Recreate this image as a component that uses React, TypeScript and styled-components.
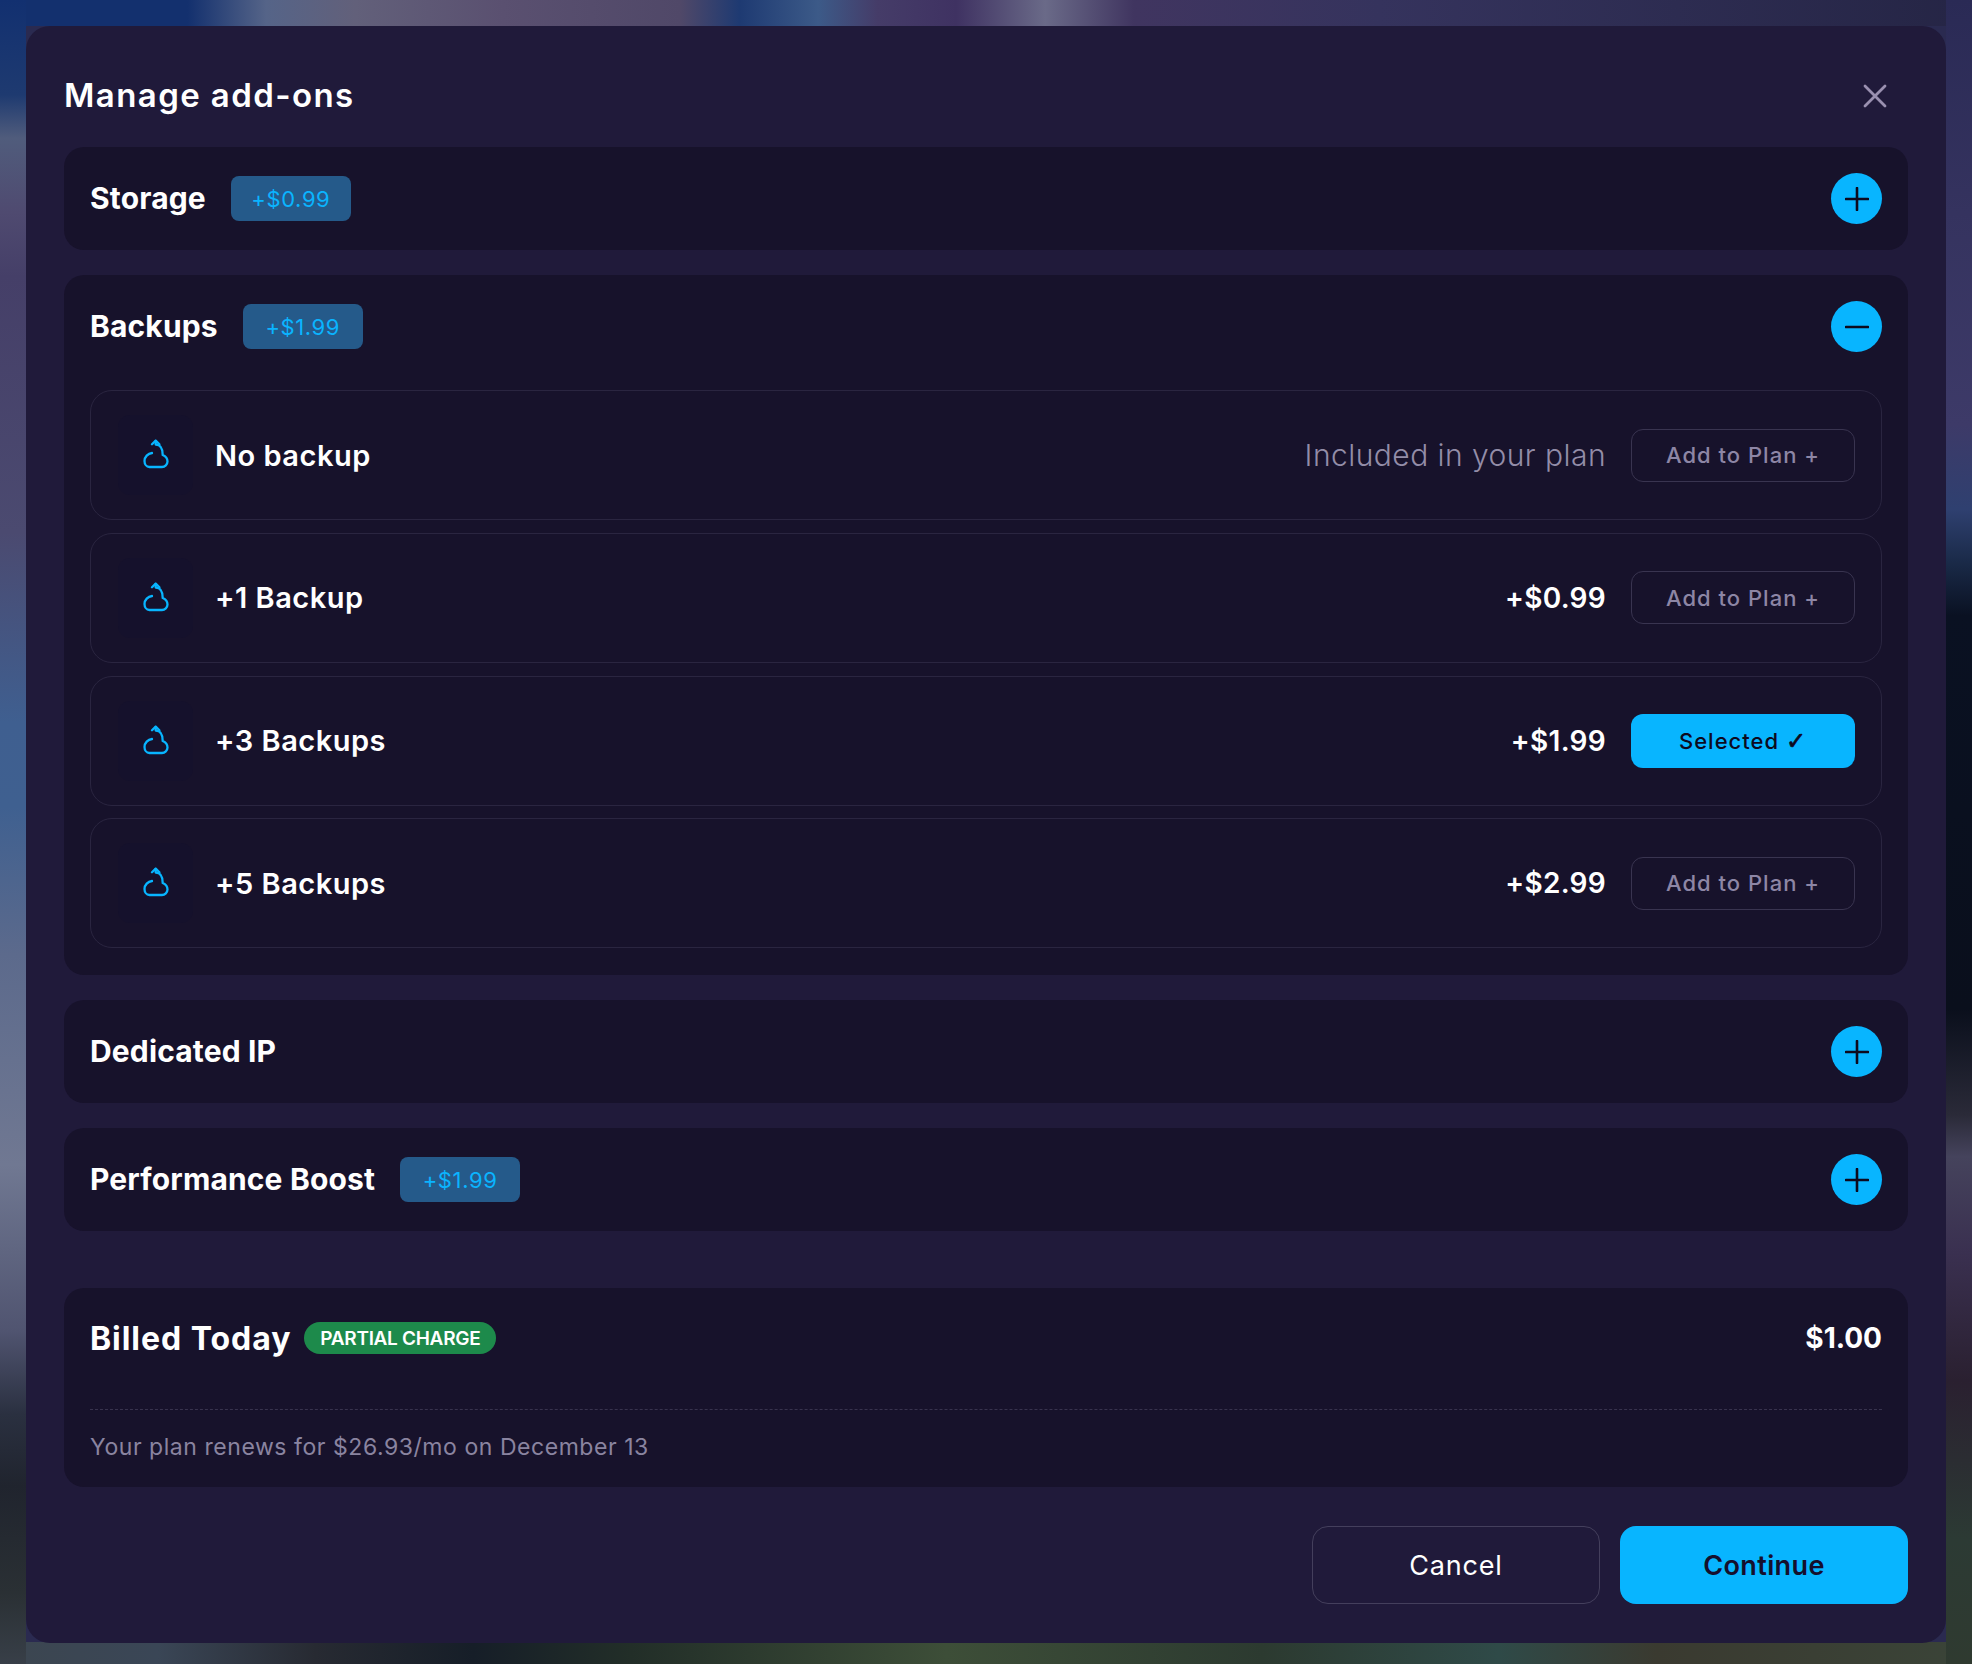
import * as React from 'react';
import styled, { createGlobalStyle } from 'styled-components';

const Global = createGlobalStyle`
  html, body {
    margin: 0;
    padding: 0;
    background: #201a3a;
  }
  * {
    box-sizing: border-box;
  }
`;

const Backdrop = styled.div`
  width: 1972px;
  height: 1664px;
  overflow: hidden;
  padding: 26px 26px 21px;
  font-family: Inter, "Liberation Sans", sans-serif;
  background-color: #2a2a50;
  background-repeat: no-repeat;
  background-size: 26px 100%, 26px 100%, 100% 26px, 100% 22px;
  background-position: left top, right top, left top, left bottom;
  background-image:
    linear-gradient(180deg, #123070 0%, #1e3a70 5.7%, #505c7c 8.3%, #4f4a70 12.8%, #453f68 16.6%, #4b4a70 32%, #3f5f90 43.4%, #3f6090 48.5%, #5c6a8c 57.4%, #707892 70%, #505470 80%, #2a3040 85%, #20242e 89.3%, #2a3034 95.7%, #383f48 100%),
    linear-gradient(180deg, #2a2a55 0%, #35335f 12.8%, #3d3a68 25.5%, #2f4070 30.6%, #1a2a48 33.8%, #0a1122 37%, #0a0f1c 60.6%, #2a2a38 67%, #45435c 69.5%, #3a3050 75.3%, #2a2030 83%, #2c3a34 92.5%, #2f3a30 100%),
    linear-gradient(90deg, #13306e 0%, #13306e 9.5%, #556488 13.5%, #62607a 18%, #5a5070 25.5%, #504868 34.5%, #1e3a72 37.5%, #3c5a88 41.5%, #453c68 44.5%, #3f3262 48.5%, #6a6a88 53%, #403560 57.5%, #35335d 70%, #252545 100%),
    linear-gradient(90deg, #3c4650 0%, #3a4656 8%, #272a32 16%, #161e28 24%, #222e28 32%, #3d4e38 48%, #2c3a30 64%, #2f4a48 76%, #3a3a30 84%, #3a4438 100%);
`;

const Modal = styled.section`
  height: 100%;
  padding: 0 38px;
  background: #201a3a;
  border-radius: 24px;
  display: flex;
  flex-direction: column;
`;

const ModalHeader = styled.header`
  height: 121px;
  padding-top: 38px;
  padding-bottom: 19px;
  display: flex;
  align-items: center;
  justify-content: space-between;
`;

const ModalTitle = styled.h1`
  margin: 0;
  padding-bottom: 2px;
  font-size: 33px;
  font-weight: 600;
  letter-spacing: 1.4px;
  color: #ffffff;
`;

const CloseButton = styled.button`
  width: 30px;
  height: 30px;
  margin-right: 18px;
  padding: 0;
  border: 0;
  background: none;
  display: flex;
  align-items: center;
  justify-content: center;
`;

const Stack = styled.div`
  display: flex;
  flex-direction: column;
  gap: 25px;
`;

const Card = styled.div`
  padding: 26px;
  background: #17122b;
  border-radius: 20px;
`;

const CardHeader = styled.div`
  height: 51px;
  display: flex;
  align-items: center;
  gap: 25px;
`;

const CardTitle = styled.h2`
  margin: 0;
  padding-bottom: 1px;
  font-size: 30px;
  font-weight: 700;
  letter-spacing: 0.15px;
  color: #ffffff;
`;

const PriceBadge = styled.span`
  width: 120px;
  height: 45px;
  display: flex;
  align-items: center;
  justify-content: center;
  background: #255a8a;
  border-radius: 8px;
  font-size: 22px;
  letter-spacing: 0.6px;
  color: #0ab4ff;
`;

const RoundToggle = styled.button`
  width: 51px;
  height: 51px;
  margin-left: auto;
  padding: 0;
  border: 0;
  border-radius: 50%;
  background: #08b5ff;
  display: flex;
  align-items: center;
  justify-content: center;
`;

const Rows = styled.div`
  margin-top: 38px;
  padding-bottom: 1px;
  display: flex;
  flex-direction: column;
  gap: 12.75px;
`;

const Row = styled.div`
  height: 130px;
  padding: 0 26px 0 27px;
  border: 1px solid #2a2540;
  border-radius: 22px;
  display: flex;
  align-items: center;
`;

const IconBox = styled.div`
  width: 75px;
  height: 80px;
  margin-right: 22px;
  padding-bottom: 2px;
  background: #15112c;
  border-radius: 12px;
  display: flex;
  align-items: center;
  justify-content: center;
`;

const RowName = styled.span`
  font-size: 29px;
  font-weight: 600;
  letter-spacing: 0.5px;
  color: #ffffff;
`;

const RowPrice = styled.span<{ $muted?: boolean }>`
  margin-left: auto;
  margin-right: 25px;
  font-size: ${({ $muted }) => ($muted ? '30px' : '28px')};
  font-weight: ${({ $muted }) => ($muted ? 300 : 600)};
  letter-spacing: ${({ $muted }) => ($muted ? '0.45px' : '0.3px')};
  color: ${({ $muted }) => ($muted ? '#938da8' : '#ffffff')};
`;

const PlanButton = styled.button<{ $selected?: boolean }>`
  width: 224px;
  height: ${({ $selected }) => ($selected ? '54px' : '53px')};
  border-radius: 12px;
  border: ${({ $selected }) => ($selected ? '0' : '1.5px solid #393450')};
  background: ${({ $selected }) => ($selected ? '#08b5ff' : 'transparent')};
  color: ${({ $selected }) => ($selected ? '#0d0a1e' : '#8d86a5')};
  font-family: inherit;
  font-size: 22px;
  font-weight: 500;
  letter-spacing: 1px;
`;

const CheckMark = styled.span`
  font-family: "DejaVu Sans", sans-serif;
  font-size: 24px;
  line-height: 1;
  -webkit-text-stroke: 0.7px #0d0a1e;
`;

const BilledCard = styled(Card)`
  margin-top: 56.75px;
  height: 199px;
  padding-bottom: 22px;
`;

const BilledTop = styled.div`
  height: 48px;
  display: flex;
  align-items: center;
  gap: 13px;
`;

const BilledTitle = styled.h2`
  margin: 0;
  font-size: 32px;
  font-weight: 700;
  letter-spacing: 0.95px;
  color: #ffffff;
`;

const ChargeBadge = styled.span`
  width: 192px;
  height: 32px;
  display: flex;
  align-items: center;
  justify-content: center;
  background: #1d8a4b;
  border-radius: 16px;
  font-size: 19px;
  font-weight: 600;
  letter-spacing: -0.3px;
  color: #ffffff;
`;

const BilledAmount = styled.span`
  margin-left: auto;
  font-size: 28px;
  font-weight: 700;
  color: #ffffff;
`;

const Divider = styled.hr`
  margin: 47px 0 0;
  border: 0;
  border-top: 1px dashed #38334e;
`;

const RenewNote = styled.p`
  margin: 19px 0 0;
  line-height: 36px;
  font-size: 23px;
  letter-spacing: 0.55px;
  color: #8a84a0;
`;

const Footer = styled.footer`
  margin-top: 39px;
  display: flex;
  justify-content: flex-end;
  gap: 20px;
`;

const FooterButton = styled.button<{ $primary?: boolean }>`
  width: 288px;
  height: 78px;
  border-radius: 16px;
  border: ${({ $primary }) => ($primary ? '0' : '1.5px solid #443f5c')};
  background: ${({ $primary }) => ($primary ? '#08b5ff' : 'transparent')};
  color: ${({ $primary }) => ($primary ? '#150f2d' : '#ffffff')};
  font-family: inherit;
  font-size: 27px;
  font-weight: ${({ $primary }) => ($primary ? 600 : 400)};
  letter-spacing: ${({ $primary }) => ($primary ? '0.4px' : '0.8px')};
`;

const CloudIcon = () => (
  <svg width="26" height="30" viewBox="0 0 26 30" fill="none" stroke="#08b5ff" strokeWidth="2.3" strokeLinecap="round" strokeLinejoin="round">
    <path d="M9 5.2 12.7 1.6 16.4 5.2" />
    <path d="M12.7 2v3.6c4.5 0 7 3.5 7 10.4 2.6 1 4.8 3.4 4.8 6.6 0 3-2.6 5.4-5.5 5.4H6.5C3.4 28 1.5 25 1.5 22c0-4 3.4-7.6 7.5-8" />
  </svg>
);

const PlusIcon = () => (
  <svg width="24" height="24" viewBox="0 0 24 24" stroke="#0d0a1e" strokeWidth="2.6" strokeLinecap="round">
    <path d="M1 12h22M12 1v22" />
  </svg>
);

const MinusIcon = () => (
  <svg width="24" height="24" viewBox="0 0 24 24" stroke="#0d0a1e" strokeWidth="2.6" strokeLinecap="round">
    <path d="M1 12h22" />
  </svg>
);

const backups = [
  { name: 'No backup', price: 'Included in your plan', muted: true },
  { name: '+1 Backup', price: '+$0.99' },
  { name: '+3 Backups', price: '+$1.99', selected: true },
  { name: '+5 Backups', price: '+$2.99' },
];

const Section = function ({ title, price, open, children }: {
  title: string, price?: string, open?: boolean, children?: React.ReactNode,
}) {
  return (
    <Card>
      <CardHeader>
        <CardTitle>{title}</CardTitle>
        {price && <PriceBadge>{price}</PriceBadge>}
        <RoundToggle aria-label={open ? 'Collapse' : 'Expand'}>
          {open ? <MinusIcon /> : <PlusIcon />}
        </RoundToggle>
      </CardHeader>
      {children}
    </Card>
  );
};

const App = function () {
  return (
    <Backdrop>
      <Global />
      <Modal>
        <ModalHeader>
          <ModalTitle>Manage add-ons</ModalTitle>
          <CloseButton aria-label="Close">
            <svg width="24" height="24" viewBox="0 0 24 24" stroke="#9a90b0" strokeWidth="2.8" strokeLinecap="round">
              <path d="M2 2l20 20M22 2 2 22" />
            </svg>
          </CloseButton>
        </ModalHeader>
        <Stack>
          <Section title="Storage" price="+$0.99" />
          <Section title="Backups" price="+$1.99" open>
            <Rows>
              {backups.map((b) => (
                <Row key={b.name}>
                  <IconBox><CloudIcon /></IconBox>
                  <RowName>{b.name}</RowName>
                  <RowPrice $muted={b.muted}>{b.price}</RowPrice>
                  {b.selected
                    ? <PlanButton $selected>Selected <CheckMark>✓</CheckMark></PlanButton>
                    : <PlanButton>Add to Plan +</PlanButton>}
                </Row>
              ))}
            </Rows>
          </Section>
          <Section title="Dedicated IP" />
          <Section title="Performance Boost" price="+$1.99" />
        </Stack>
        <BilledCard>
          <BilledTop>
            <BilledTitle>Billed Today</BilledTitle>
            <ChargeBadge>PARTIAL CHARGE</ChargeBadge>
            <BilledAmount>$1.00</BilledAmount>
          </BilledTop>
          <Divider />
          <RenewNote>Your plan renews for $26.93/mo on December 13</RenewNote>
        </BilledCard>
        <Footer>
          <FooterButton>Cancel</FooterButton>
          <FooterButton $primary>Continue</FooterButton>
        </Footer>
      </Modal>
    </Backdrop>
  );
};

export default App;
